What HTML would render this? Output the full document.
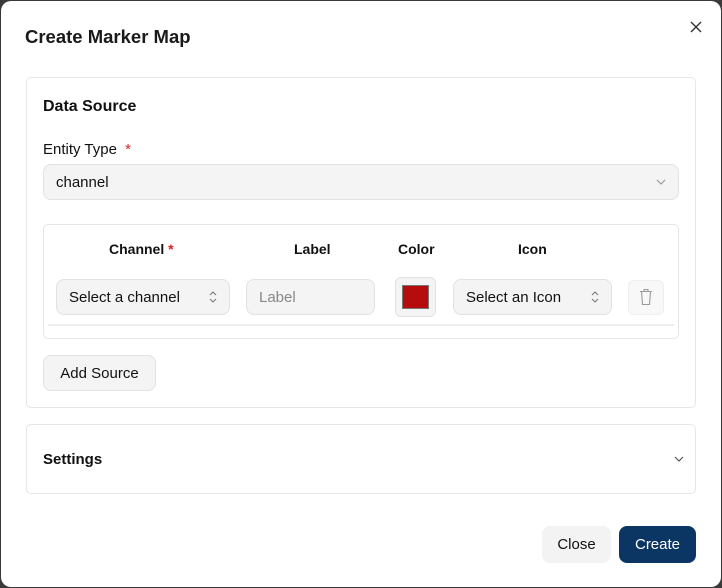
<!DOCTYPE html>
<html><head><style>
*{box-sizing:border-box;margin:0;padding:0}
body{width:722px;height:588px;background:#3a3a3a;font-family:"Liberation Sans",sans-serif;color:#111;position:relative;overflow:hidden}
.dlg{position:absolute;left:1px;top:1px;width:720px;height:586px;background:#fff;border-radius:10px}
.abs{position:absolute}
.card{position:absolute;border:1px solid #e6e6e6;border-radius:5px;background:#fff}
.field{position:absolute;background:#f4f4f4;border:1px solid #e2e2e2;border-radius:8px;font-size:15px;display:flex;align-items:center;padding-left:12px}
.chev{position:absolute;right:12px;top:50%;transform:translateY(-50%)}
.hd{position:absolute;font-weight:bold;font-size:14px;top:240px}
.btn{position:absolute;border-radius:8px;font-size:15px;display:flex;align-items:center;justify-content:center}
</style></head><body>
<div class="dlg">
<div class="abs" style="left:24px;top:25px;font-size:18.5px;font-weight:bold;color:#1a1a1a">Create Marker Map</div>
<svg class="abs" style="left:689px;top:20px" width="12" height="12" viewBox="0 0 12 12"><path d="M1 1L11 11M11 1L1 11" stroke="#333" stroke-width="1.4"/></svg>

<div class="card" style="left:25px;top:76px;width:670px;height:331px"></div>
<div class="abs" style="left:42px;top:97px;font-weight:bold;font-size:16px">Data Source</div>
<div class="abs" style="left:42px;top:140px;font-size:15px">Entity Type <span style="color:#d22;margin-left:4px">*</span></div>
<div class="field" style="left:42px;top:163px;width:636px;height:36px">channel
<svg class="chev" width="10" height="6" viewBox="0 0 10 6"><path d="M1 1l4 4 4-4" stroke="#999" fill="none" stroke-width="1.2"/></svg></div>

<div class="card" style="left:42px;top:223px;width:636px;height:115px"></div>
<div class="abs" style="left:47px;top:323px;width:626px;height:2px;background:#eee"></div>
<div class="hd" style="left:108px">Channel <span style="color:#d22">*</span></div>
<div class="hd" style="left:293px">Label</div>
<div class="hd" style="left:397px">Color</div>
<div class="hd" style="left:517px">Icon</div>
<div class="field" style="left:55px;top:278px;width:174px;height:36px;color:#111">Select a channel
<svg class="chev" width="8" height="12" viewBox="0 0 8 12"><path d="M1 4l3-3 3 3M1 8l3 3 3-3" stroke="#777" fill="none" stroke-width="1.1"/></svg></div>
<div class="field" style="left:245px;top:278px;width:129px;height:36px;color:#888">Label</div>
<div class="abs" style="left:394px;top:276px;width:41px;height:40px;background:#f4f4f4;border:1px solid #e2e2e2;border-radius:6px"></div>
<div class="abs" style="left:401px;top:284px;width:27px;height:24px;background:#b50d0d;border:1px solid #777"></div>
<div class="field" style="left:452px;top:278px;width:159px;height:36px">Select an Icon
<svg class="chev" width="8" height="12" viewBox="0 0 8 12"><path d="M1 4l3-3 3 3M1 8l3 3 3-3" stroke="#777" fill="none" stroke-width="1.1"/></svg></div>
<div class="abs" style="left:627px;top:279px;width:36px;height:35px;background:#f8f8f8;border:1px solid #eee;border-radius:6px"></div>
<svg class="abs" style="left:638px;top:287px" width="14" height="18" viewBox="0 0 14 18"><path d="M1 3.5h12M5 3.5V1.5h4v2M2.5 3.5l1 13h7l1-13" stroke="#999" fill="none" stroke-width="1.1"/></svg>

<div class="btn" style="left:42px;top:354px;width:113px;height:36px;background:#f4f4f4;border:1px solid #e2e2e2">Add Source</div>

<div class="card" style="left:25px;top:423px;width:670px;height:70px"></div>
<div class="abs" style="left:42px;top:450px;font-weight:bold;font-size:15px">Settings</div>
<svg class="abs" style="left:673px;top:455px" width="10" height="6" viewBox="0 0 10 6"><path d="M1 1l4 4 4-4" stroke="#555" fill="none" stroke-width="1.2"/></svg>

<div class="btn" style="left:541px;top:525px;width:69px;height:37px;background:#f3f3f3">Close</div>
<div class="btn" style="left:618px;top:525px;width:77px;height:37px;background:#0b3563;color:#fff">Create</div>
</div>
</body></html>
